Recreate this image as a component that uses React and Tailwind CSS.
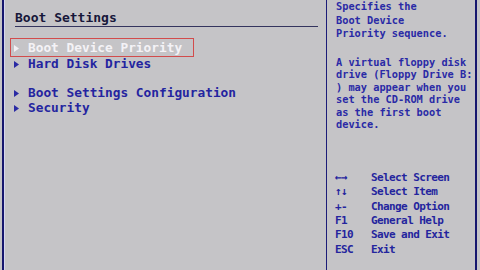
import React from "react";

const Tri = ({ color }) => (
  <svg width="5" height="7" viewBox="0 0 5 7" className="shrink-0">
    <path d="M0 0 L5 3.5 L0 7 Z" fill={color} />
  </svg>
);

const Item = ({ label, active }) => (
  <div className="relative h-[16px] w-[184px] flex items-center pl-[4px]">
    {active && (
      <span className="absolute left-0 right-0 top-[-2px] bottom-[-1px] border border-[#d24c4c]" />
    )}
    <Tri color={active ? "#f2f0f4" : "#2a2aa4"} />
    <span
      className={
        "ml-[9px] text-[12.8px] leading-[16px] whitespace-pre " +
        (active ? "text-[#f4f2f6]" : "text-[#2424a0]")
      }
    >
      {label}
    </span>
  </div>
);

const help = [
  ["←→", "Select Screen"],
  ["↑↓", "Select Item"],
  ["+-", "Change Option"],
  ["F1", "General Help"],
  ["F10", "Save and Exit"],
  ["ESC", "Exit"],
];

export default function App() {
  return (
    <div className="w-[480px] h-[270px] bg-[#c5c4c7] flex overflow-hidden font-['DejaVu_Sans_Mono',monospace] font-bold">
      <div className="w-[2px]" />
      <div className="w-[2px] bg-[#16166e]" />
      <div className="w-px bg-[#d6d6ee]" />
      <div className="w-[321px] flex flex-col pl-[10px]">
        <div className="mt-[9px] h-[18px] w-[303px] border-b border-[#34345e] text-[13px] leading-[17px] text-[#17173a]">
          Boot Settings
        </div>
        <div className="mt-[13px] ml-[-5px] flex flex-col">
          <Item label="Boot Device Priority" active />
          <Item label="Hard Disk Drives" />
          <div className="h-[13px]" />
          <Item label="Boot Settings Configuration" />
          <div className="-mt-px">
            <Item label="Security" />
          </div>
        </div>
      </div>
      <div className="w-px bg-[#1c1c78]" />
      <div className="w-[148px] flex flex-col pl-[9px] text-[#2a2aa6]">
        <div className="text-[10.3px] leading-[13.5px] whitespace-pre">
          <div>Specifies the</div>
          <div>Boot Device</div>
          <div>Priority sequence.</div>
        </div>
        <div className="mt-[15px] text-[10.3px] leading-[12.6px] whitespace-pre">
          <div>A virtual floppy disk</div>
          <div>drive (Floppy Drive B:</div>
          <div>) may appear when you</div>
          <div>set the CD-ROM drive</div>
          <div>as the first boot</div>
          <div>device.</div>
        </div>
        <div className="mt-[40px] -ml-px grid grid-cols-[36px_1fr] text-[11px] leading-[14.3px] tracking-[-0.6px] text-[#24249e]">
          {help.map(([k, v]) => (
            <React.Fragment key={k}>
              <div className="whitespace-pre">{k}</div>
              <div className="whitespace-pre">{v}</div>
            </React.Fragment>
          ))}
        </div>
      </div>
      <div className="w-[2px] bg-[#16166e]" />
      <div className="flex-1" />
    </div>
  );
}
